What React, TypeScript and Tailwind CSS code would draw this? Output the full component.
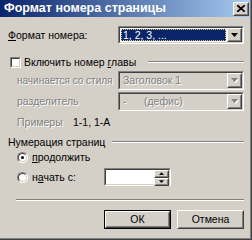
import { FC, ReactNode } from "react";

const font = "font-['Liberation_Sans',Arial,sans-serif]";

// sunken 3D frame used by combos and edit boxes
const Sunken: FC<{ className?: string; inner?: string; children?: ReactNode }> = ({ className = "", inner = "bg-white", children }) => (
  <div className={`border border-t-[#808080] border-l-[#808080] border-r-white border-b-white ${className}`}>
    <div className={`h-full w-full flex border border-t-[#404040] border-l-[#404040] border-r-[#d4d0c8] border-b-[#d4d0c8] ${inner}`}>
      {children}
    </div>
  </div>
);

// raised 3D frame for buttons
const Raised: FC<{ className?: string; children?: ReactNode }> = ({ className = "", children }) => (
  <div className={`border border-t-white border-l-white border-r-[#404040] border-b-[#404040] ${className}`}>
    <div className="h-full w-full flex items-center justify-center border border-t-[#d4d0c8] border-l-[#d4d0c8] border-r-[#808080] border-b-[#808080] bg-[#d4d0c8]">
      {children}
    </div>
  </div>
);

const Arrow: FC<{ disabled?: boolean; up?: boolean; size?: number }> = ({ disabled, up, size = 7 }) => (
  <svg width={size} height={Math.ceil(size / 2) + 1} viewBox="0 0 7 5">
    {disabled && <polygon points="1,1 8,1 4.5,5" fill="#ffffff" />}
    <polygon points={up ? "0,4 7,4 3.5,0" : "0,0 7,0 3.5,4"} fill={disabled ? "#808080" : "#000000"} />
  </svg>
);

const Combo: FC<{ text: string; disabled?: boolean; focused?: boolean }> = ({ text, disabled, focused }) => (
  <Sunken className="w-[126px] h-full" inner={disabled ? "bg-[#d4d0c8]" : "bg-white"}>
    <div className="flex-1 flex items-center p-[1px] min-w-0">
      {focused ? (
        <div className="h-full w-full bg-[#0a246a] border border-dotted border-[#d8c870] flex items-center pl-[1px] text-white leading-none">
          {text}
        </div>
      ) : (
        <span className="pl-[2px] leading-none text-[#808080] [text-shadow:1px_1px_0_#ffffff] whitespace-pre">{text}</span>
      )}
    </div>
    <Raised className="w-[15px] h-full">
      <Arrow disabled={disabled} />
    </Raised>
  </Sunken>
);

const Etched: FC<{ className?: string }> = ({ className = "" }) => (
  <div className={`h-[2px] border-t border-t-[#808080] border-b border-b-white ${className}`} />
);

const Radio: FC<{ checked?: boolean }> = ({ checked }) => (
  <div className="w-[11px] h-[11px] rounded-full border border-t-[#808080] border-l-[#808080] border-r-white border-b-white">
    <div className="w-full h-full rounded-full bg-white border border-t-[#404040] border-l-[#404040] border-r-[#d4d0c8] border-b-[#d4d0c8] flex items-center justify-center">
      {checked && <div className="w-[3px] h-[3px] rounded-full bg-black" />}
    </div>
  </div>
);

const App: FC = () => {
  return (
    <div className={`w-[252px] h-[240px] bg-[#d4d0c8] ${font} text-black border-r border-b border-[#404040]`}>
      <div className="h-full flex flex-col border-r border-b border-[#808080]">
        {/* title bar */}
        <div className="h-[17px] flex items-center pl-[4px] pr-[1px] bg-[linear-gradient(to_right,#0a246a,#a6caf0)]">
          <span className="flex-1 text-white font-bold text-[12.5px] leading-none">Формат номера страницы</span>
          <Raised className="w-[16px] h-[14px]">
            <svg width="8" height="7" viewBox="0 0 8 7">
              <path d="M0 0 L8 7 M8 0 L0 7" stroke="#000" strokeWidth="1.8" />
            </svg>
          </Raised>
        </div>

        <div className="flex flex-col text-[10.5px] leading-none whitespace-nowrap">
          {/* number format */}
          <div className="mt-[9px] h-[18px] flex items-center pl-[8px] pr-[6px]">
            <span className="flex-1">
              <span className="underline">Ф</span>ормат номера:
            </span>
            <Combo text="1, 2, 3, ..." focused />
          </div>

          {/* chapter number */}
          <div className="mt-[12px] h-[12px] flex items-center pl-[10px] pr-[6px]">
            <div className="w-[11px] h-[11px] border border-t-[#808080] border-l-[#808080] border-r-white border-b-white">
              <div className="w-full h-full bg-white border border-t-[#404040] border-l-[#404040] border-r-[#d4d0c8] border-b-[#d4d0c8]" />
            </div>
            <span className="ml-[3px]">
              Включить номер <span className="underline">г</span>лавы
            </span>
            <Etched className="flex-1 ml-[12px]" />
          </div>

          <div className="mt-[3px] h-[19px] flex items-center pl-[17px] pr-[6px]">
            <span className="flex-1 text-[10px] text-[#808080] [text-shadow:1px_1px_0_#ffffff]">начинается со стиля</span>
            <Combo text="Заголовок 1" disabled />
          </div>

          <div className="mt-[2px] h-[19px] flex items-center pl-[17px] pr-[6px]">
            <span className="flex-1 text-[#808080] [text-shadow:1px_1px_0_#ffffff]">разделитель</span>
            <Combo text={"-      (дефис)"} disabled />
          </div>

          <div className="mt-[5px] h-[12px] flex items-center pl-[17px]">
            <span className="w-[56px] text-[#808080] [text-shadow:1px_1px_0_#ffffff]">Примеры</span>
            <span>1-1, 1-А</span>
          </div>

          {/* page numbering */}
          <div className="mt-[8px] h-[12px] flex items-center pl-[8px] pr-[6px]">
            <span>Нумерация страниц</span>
            <Etched className="flex-1 ml-[7px]" />
          </div>

          <div className="mt-[3px] h-[12px] flex items-center pl-[17px]">
            <Radio checked />
            <span className="ml-[4px]">
              <span className="underline">п</span>родолжить
            </span>
          </div>

          <div className="mt-[5px] h-[18px] flex items-center pl-[17px]">
            <Radio />
            <span className="ml-[4px] w-[72px]">
              н<span className="underline">а</span>чать с:
            </span>
            <Sunken className="w-[67px] h-full">
              <div className="flex-1" />
              <div className="w-[15px] flex flex-col">
                <Raised className="flex-1">
                  <Arrow up size={5} />
                </Raised>
                <Raised className="flex-1">
                  <Arrow size={5} />
                </Raised>
              </div>
            </Sunken>
          </div>

          <Etched className="mt-[13px] ml-[16px] mr-[6px]" />

          {/* buttons */}
          <div className="mt-[9px] h-[19px] flex justify-end gap-[6px] pr-[6px]">
            <div className="w-[67px] h-full border border-black">
              <Raised className="w-full h-full">
                <span>ОК</span>
              </Raised>
            </div>
            <Raised className="w-[67px] h-full">
              <span>Отмена</span>
            </Raised>
          </div>
        </div>
      </div>
    </div>
  );
};

export default App;
